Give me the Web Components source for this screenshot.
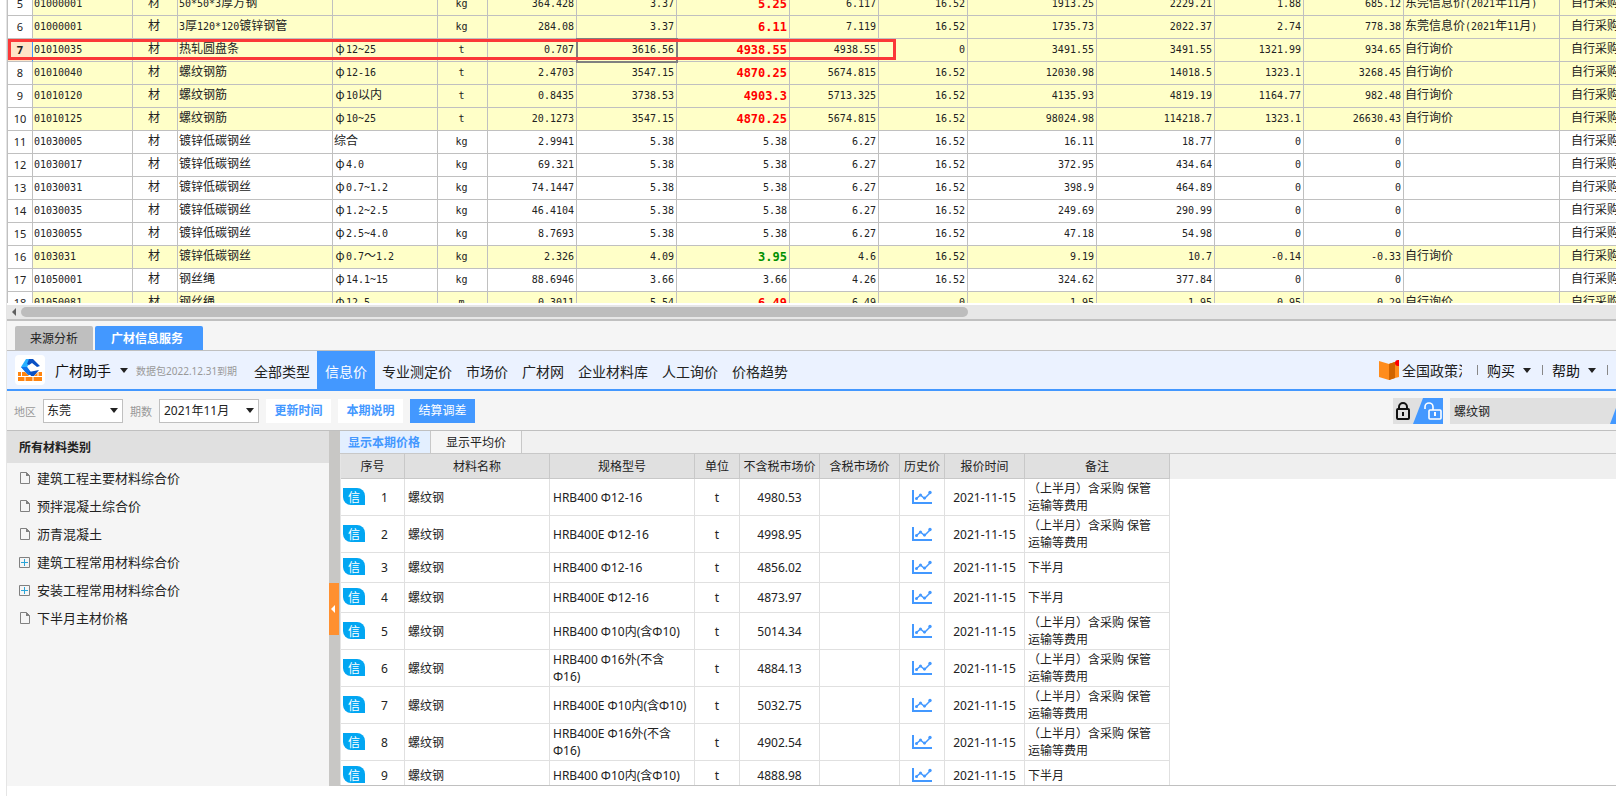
<!DOCTYPE html>
<html lang="zh-CN">
<head>
<meta charset="utf-8">
<title>广材助手</title>
<style>
html,body{margin:0;height:100%;background:#fff}
body{font-family:"Noto Sans","Noto Sans CJK SC",sans-serif;font-size:12px;color:#222;
  --blue:#4398ff;--line:#c0c0c0;--pane:#f5f5f5;overflow:hidden}
</style>
</head>
<body>
<app-shell>
  <price-grid slot="grid"></price-grid>
  <dock-tabs slot="dock"></dock-tabs>
  <helper-bar slot="dock"></helper-bar>
  <filter-bar slot="dock"></filter-bar>
  <split-view slot="work">
    <category-tree slot="side"></category-tree>
    <quote-panel slot="main"></quote-panel>
  </split-view>
</app-shell>
<script>
const define = (name, render) => customElements.define(name, class extends HTMLElement {
  connectedCallback() {
    if (this.shadowRoot) return;
    this.attachShadow({mode: 'open'}).innerHTML = render(this);
  }
});

define('app-shell', () => `
<style>
:host{display:flex;flex-direction:column;height:100vh;box-sizing:border-box;margin-left:6px;border-left:1px solid #e5e5e5;padding-bottom:10px}
.grid{flex:319 1 0;min-height:0;display:flex;flex-direction:column}
.dock{flex:none;border-top:2px solid var(--line)}
.work{flex:355 1 0;min-height:0;display:flex}
::slotted([slot=grid]),::slotted([slot=work]){flex:1;min-height:0;min-width:0}
</style>
<div class="grid"><slot name="grid"></slot></div>
<div class="dock"><slot name="dock"></slot></div>
<div class="work"><slot name="work"></slot></div>`);

/* ---------- material price grid ---------- */
const ROWS = [
 [5,'01000001','50*50*3厚方钢','','kg','364.428','3.37','5.25','6.117','16.52','1913.25','2229.21','1.88','685.12','东莞信息价(2021年11月)','y r'],
 [6,'01000001','3厚120*120镀锌钢管','','kg','284.08','3.37','6.11','7.119','16.52','1735.73','2022.37','2.74','778.38','东莞信息价(2021年11月)','y r'],
 [7,'01010035','热轧圆盘条','φ12~25','t','0.707','3616.56','4938.55','4938.55','0','3491.55','3491.55','1321.99','934.65','自行询价','y r cur'],
 [8,'01010040','螺纹钢筋','φ12-16','t','2.4703','3547.15','4870.25','5674.815','16.52','12030.98','14018.5','1323.1','3268.45','自行询价','y r'],
 [9,'01010120','螺纹钢筋','φ10以内','t','0.8435','3738.53','4903.3','5713.325','16.52','4135.93','4819.19','1164.77','982.48','自行询价','y r'],
 [10,'01010125','螺纹钢筋','φ10~25','t','20.1273','3547.15','4870.25','5674.815','16.52','98024.98','114218.7','1323.1','26630.43','自行询价','y r'],
 [11,'01030005','镀锌低碳钢丝','综合','kg','2.9941','5.38','5.38','6.27','16.52','16.11','18.77','0','0','',''],
 [12,'01030017','镀锌低碳钢丝','φ4.0','kg','69.321','5.38','5.38','6.27','16.52','372.95','434.64','0','0','',''],
 [13,'01030031','镀锌低碳钢丝','φ0.7~1.2','kg','74.1447','5.38','5.38','6.27','16.52','398.9','464.89','0','0','',''],
 [14,'01030035','镀锌低碳钢丝','φ1.2~2.5','kg','46.4104','5.38','5.38','6.27','16.52','249.69','290.99','0','0','',''],
 [15,'01030055','镀锌低碳钢丝','φ2.5~4.0','kg','8.7693','5.38','5.38','6.27','16.52','47.18','54.98','0','0','',''],
 [16,'0103031','镀锌低碳钢丝','φ0.7～1.2','kg','2.326','4.09','3.95','4.6','16.52','9.19','10.7','-0.14','-0.33','自行询价','y g'],
 [17,'01050001','钢丝绳','φ14.1~15','kg','88.6946','3.66','3.66','4.26','16.52','324.62','377.84','0','0','',''],
 [18,'01050081','钢丝绳','φ12.5','m','0.3011','5.54','6.49','6.49','0','1.95','1.95','0.95','0.29','自行询价','y r']
];
const COLS = [25,100,45,155,105,50,89,100,113,89,89,129,118,89,100,156,120];
/* ideographs are set one size larger than the fixed-width figures beside them */
const mix = s => s.replace(/φ/g,'\u0001').replace(/[\u4e00-\u9fff～]+/g, m => `<b class="c">${m}</b>`).replace(/\u0001/g,'<b class="c phi">φ</b>');

define('price-grid', () => `
<style>
:host{display:flex;flex-direction:column;background:#fff}
.view{flex:1;min-height:0;overflow:hidden;position:relative;border-left:1px solid var(--line)}
table{border-spacing:0;table-layout:fixed;width:${COLS.reduce((a,b)=>a+b)}px;margin-top:-7px;font-family:"DejaVu Sans Mono","Noto Sans CJK SC",monospace;font-size:10px}
td,th{height:22px;line-height:18px;padding:0 2px;border:solid var(--line);border-width:0 1px 1px 0;white-space:nowrap;overflow:hidden;text-align:right;font-weight:400}
th{font-family:"Noto Sans",sans-serif;font-size:11px;text-align:center;background:#fff;padding:0}
.c{font:12px/14px "Noto Sans CJK SC",sans-serif}
.phi{display:inline-block;width:12px;text-align:center}
.l{text-align:left}.m{text-align:center}.l,.m{padding:0 3px 0 1px}
.last{text-align:left;padding-left:11px}
.y td{background:#ffffc8}
.r .price{color:red;font-weight:700;font-size:12px}
.g .price{color:#009000;font-weight:700;font-size:12px}
.cur th{background:#ffe4c8;font-weight:700;border-right:1px solid var(--blue)}
.cur .focus{outline:2px solid #808080;outline-offset:-1px}
.mark{position:absolute;left:0;top:39px;width:882px;height:15px;border:3px solid #fb3838}
.bar{flex:none;height:14px;margin-top:2px;background:#e7e7e7;display:flex;align-items:center;padding-left:5px;gap:5px}
.bar i{border:solid transparent;border-width:4px 4px 4px 0;border-right-color:#606060}
.bar div{height:10px;flex:190 1 0;background:#bdbdbd;border-radius:5px}
.bar span{flex:129 1 0}
</style>
<div class="view">
<table><colgroup>${COLS.map(w=>`<col style="width:${w}px">`).join('')}</colgroup><tbody>
${ROWS.map(r=>`<tr class="${r[15]}"><th scope="row">${r[0]}</th><td class="l">${r[1]}</td><td class="m">${mix('材')}</td><td class="l">${mix(r[2])}</td><td class="l">${mix(r[3])}</td><td class="m">${r[4]}</td><td>${r[5]}</td><td class="focus">${r[6]}</td><td class="price">${r[7]}</td>${r.slice(8,14).map(v=>`<td>${v}</td>`).join('')}<td class="l">${mix(r[14])}</td><td class="last">${mix('自行采购')}</td></tr>`).join('')}
</tbody></table>
<div class="mark"></div>
</div>
<div class="bar"><i></i><div></div><span></span></div>`);

/* ---------- dock tabs ---------- */
define('dock-tabs', () => `
<style>
:host{display:flex;align-items:flex-end;gap:2px;height:29px;padding-left:8px;background:var(--pane);border-bottom:1px solid var(--line)}
button{font:12px/24px "Noto Sans","Noto Sans CJK SC",sans-serif;height:24px;border:0;border-radius:2px 2px 0 0;padding:1px 15px 0;background:#bfbfbf;color:#222}
button.on{background:var(--blue);color:#fff;font-weight:700;padding:1px 20px 0 16px}
</style><button>来源分析</button><button class="on">广材信息服务</button>`);

define('drop-caret', () => `<style>:host{display:inline-block;width:0;height:0;border:solid transparent;border-width:5px 4px 0;border-top-color:#222}</style>`);

/* ---------- helper header ---------- */
define('helper-bar', () => `
<style>
:host{display:flex;align-items:center;height:38px;background:#ebf2ff;border-bottom:2px solid var(--blue);font-size:14px;white-space:nowrap;overflow:hidden}
.logo{flex:none;width:30px;height:30px;margin-left:8px;background:#fff;border-radius:4px}
button{font:inherit;color:inherit;background:none;border:0;padding:0;display:flex;align-items:center;gap:9px}
.name{margin-left:10px;color:#111}
small{font-size:10px;color:#999;margin:0 9px 0 8px;width:102px}
nav{display:flex;align-self:stretch}
a{color:#222;text-decoration:none;padding:0 7px;line-height:42px}
a.on{background:var(--blue);color:#fff;padding:0 8px}
.right{margin-left:auto;display:flex;align-items:center;gap:9px;flex:none;padding-right:8px}
.policy{display:flex;align-items:center;gap:3px;padding:0;line-height:38px;margin-right:6px}
.policy span{width:60px;overflow:hidden;padding-top:2px}
hr{width:1px;height:10px;border:0;margin:0;background:#888}
.right button{gap:8px;color:#111;padding-right:2px}
</style>
<svg class="logo" viewBox="0 0 30 30"><path d="M11 4h7l-6 8 6 8h-5l-7-8z" fill="#28b0ff"/><path d="M6 12h6l6 8h-5z" fill="#1272ea"/><path d="M14 4h4l7 7-3 1-5-4-3 2-2-1z" fill="#0a50c4"/><path d="m14 17 10-2-5 6h-3z" fill="#0a50c4"/><path d="M3 17h7l4 4h5l4-4h4v9H3z" fill="#ff8410"/><path d="M3 21.500h24M10 21v5M6.500 17v4M18 21v5M23 17v4" stroke="#fff"/></svg>
<button class="name">广材助手 <drop-caret></drop-caret></button>
<small>数据包2022.12.31到期</small>
<nav>${['全部类型','信息价','专业测定价','市场价','广材网','企业材料库','人工询价','价格趋势'].map((t,i)=>`<a href="#"${i==1?' class="on"':''}>${t}</a>`).join('')}</nav>
<div class="right">
<a class="policy" href="#"><svg width="20" height="20" viewBox="0 0 20 20"><path d="M0 1l10 3v16L0 17z" fill="#ff8c1c"/><path d="M10 4l6-2v16l-6 2z" fill="#d96a00"/><path d="M10 4l10-3v16l-4 1V4z" fill="#ff8c1c"/><path d="M10 4l6-2v16l-6 2z" fill="#d06400"/><circle cx="19" cy="3" r="3" fill="red"/></svg><span>全国政策法规</span></a>
<hr><button>购买 <drop-caret></drop-caret></button><hr><button>帮助 <drop-caret></drop-caret></button><hr>
</div>`);

/* ---------- filters ---------- */
define('filter-bar', () => `
<style>
:host{display:flex;align-items:center;height:39px;background:var(--pane);border-bottom:1px solid var(--line);padding-left:7px;white-space:nowrap}
label{font-size:11px;color:#999;margin-right:7px}
.pick{position:relative;margin-right:7px;display:flex}
.pick drop-caret{position:absolute;right:5px;top:9px}
select{appearance:none;box-sizing:border-box;width:80px;height:24px;border:1px solid var(--line);border-radius:0;background:#fff;font:12px "Noto Sans","Noto Sans CJK SC",sans-serif;color:#222;padding:0 3px}
select.wide{width:100px;padding-left:4px}
button{font:12px/24px "Noto Sans","Noto Sans CJK SC",sans-serif;height:24px;width:65px;border:0;padding:0;margin-right:7px;background:#fff;color:var(--blue);font-weight:700}
button.on{background:var(--blue);color:#fff;font-weight:400}
.lock{display:block;flex:none;margin:0 7px 0 auto}
.find{display:flex;width:166px;height:26px;background:#e0e0e0}
input{flex:1;min-width:0;border:0;background:none;padding:0 4px;font:12px "Noto Sans","Noto Sans CJK SC",sans-serif;color:#222}
</style>
<label for="area">地区</label><span class="pick"><select id="area"><option>东莞</option></select><drop-caret></drop-caret></span>
<label for="term">期数</label><span class="pick"><select id="term" class="wide"><option>2021年11月</option></select><drop-caret></drop-caret></span>
<button>更新时间</button><button>本期说明</button><button class="on">结算调差</button>
<svg class="lock" width="50" height="26" viewBox="0 0 50 26"><path d="M0 0h50v26H0z" fill="#e0e0e0"/><path d="M30 0h20v26H20z" fill="var(--blue)"/>
<g fill="none" stroke="#111" stroke-width="2"><rect x="4" y="11" width="12" height="10" rx="1"/><path d="M6 11V9a4 4 0 0 1 8 0v2"/></g><path d="M9 14h2v4H9z" fill="#111"/>
<g fill="none" stroke="#fff" stroke-width="1.600"><rect x="36" y="12" width="12" height="9" rx="1"/><path d="M32 11V9a4 4 0 0 1 8 0v3"/></g><path d="M41 14h2v4h-2z" fill="#fff"/></svg>
<div class="find"><input aria-label="搜索材料" value="螺纹钢"><svg width="6" height="26" viewBox="0 0 6 26"><path d="M6 10v16H0z" fill="var(--blue)"/></svg></div>`);

/* ---------- split work area ---------- */
define('split-view', () => `
<style>
:host{display:flex}
.side{flex:none;width:322px;background:var(--pane);overflow:hidden}
.grip{flex:none;width:11px;background:#c8c7c5;display:flex;align-items:center}
.grip button{width:10px;height:52px;padding:0 2px 0 0;border:0;background:#ff9030;display:flex;align-items:center;justify-content:center}
.main{flex:1;min-width:0;display:flex}
::slotted([slot=main]){flex:1;min-width:0}
</style>
<div class="side"><slot name="side"></slot></div>
<div class="grip"><button aria-label="收起"><svg width="4" height="8" viewBox="0 0 4 8"><path d="M4 0v8L0 4z" fill="#fff"/></svg></button></div>
<div class="main"><slot name="main"></slot></div>`);

const LEAF='<svg width="12" height="13" viewBox="0 0 12 13"><path d="M1.500.5h6l3 3v8h-9z" fill="none" stroke="#808080"/><path d="M7 0v4h4z" fill="#808080"/></svg>';
const PLUS='<svg width="12" height="12" viewBox="0 0 12 12"><path d="M.5.5h10v10H.5z" fill="none" stroke="#808080"/><path d="M5.500 2v7M2 5.500h7" stroke="#2ba5d8"/></svg>';
define('category-tree', () => `
<style>
:host{display:block}
h2{margin:0;height:32px;line-height:34px;padding-left:12px;font-size:12px;background:#e0e0e0}
ul{list-style:none;margin:0;padding:0 0 0 12px}
li{height:28px;display:flex;align-items:center;gap:6px;font-size:13px}
svg{margin-top:3px}
</style>
<h2>所有材料类别</h2>
<ul>${[['建筑工程主要材料综合价'],['预拌混凝土综合价'],['沥青混凝土'],['建筑工程常用材料综合价',1],['安装工程常用材料综合价',1],['下半月主材价格']].map(([t,p])=>`<li>${p?PLUS:LEAF}<span>${t}</span></li>`).join('')}</ul>`);

/* ---------- quotes ---------- */
const UP='（上半月）含采购 保管<br>运输等费用', DOWN='下半月';
const QUOTES=[['HRB400 Φ12-16','4980.53',UP],['HRB400E Φ12-16','4998.95',UP],['HRB400 Φ12-16','4856.02',DOWN],['HRB400E Φ12-16','4873.97',DOWN],
['HRB400 Φ10内(含Φ10)','5014.34',UP],['HRB400 Φ16外(不含<br>Φ16)','4884.13',UP],['HRB400E Φ10内(含Φ10)','5032.75',UP],['HRB400E Φ16外(不含<br>Φ16)','4902.54',UP],['HRB400 Φ10内(含Φ10)','4888.98',DOWN]];
const CHART='<svg width="20" height="15" viewBox="0 0 20 15"><path d="M1 0v13h19" fill="none" stroke="#4398ff" stroke-width="2"/><path d="M4 9l4.500-4 4 3.500L18 3" fill="none" stroke="#4398ff" stroke-width="1.500"/><g fill="#4398ff"><circle cx="4.500" cy="8.500" r="1.500"/><circle cx="8.500" cy="5" r="1.500"/><circle cx="12.500" cy="8" r="1.500"/><circle cx="18" cy="2.500" r="1.700"/></g></svg>';
const QC=[64,145,145,45,80,80,45,80,145];
define('quote-panel', () => `
<style>
:host{display:flex;flex-direction:column;background:#fff;overflow:hidden;border-bottom:1px solid var(--line);box-sizing:border-box}
.tabs{flex:none;display:flex;height:22px;background:#f1f1f1;border-bottom:1px solid #c8c8c8}
.tabs button{font:12px/20px "Noto Sans","Noto Sans CJK SC",sans-serif;color:#222;border:0;border-right:1px solid #c8c8c8;padding:2px 0 0;width:91px;background:#f5f5f5}
.tabs .on{background:#e3efff;color:var(--blue);font-weight:700;padding-right:2px}
.rows{flex:1;min-height:0;overflow:hidden;background:linear-gradient(#efefef 0 25px,#fff 25px)}
table{border-spacing:0;table-layout:fixed;width:830px;background:#fff;border-left:1px solid #e5e5e5}
th{height:22px;padding:2px 0 0;background:#e0e0e0;border:solid #c8c8c8;border-width:0 1px 1px 0;font-weight:400;white-space:nowrap;line-height:22px}
td{padding:1px 4px;height:27px;line-height:17px;border:solid #e0e0e0;border-width:0 1px 1px 0;text-align:center;white-space:nowrap}
td.l{text-align:left;padding-left:3px}
td.i{padding:0 0 0 2px}
.n{display:flex;align-items:center}
.n i{font:normal 12px/17px "Noto Sans CJK SC",sans-serif;width:22px;margin-bottom:2px;background:#02a6f2;color:#fff;border-radius:0 8px 0 8px}
.n span{flex:1}
svg{display:block;margin:auto}
</style>
<div class="tabs"><button class="on">显示本期价格</button><button>显示平均价</button></div>
<div class="rows"><table><colgroup>${QC.map(w=>`<col style="width:${w}px">`).join('')}</colgroup>
<thead><tr>${['序号','材料名称','规格型号','单位','不含税市场价','含税市场价','历史价','报价时间','备注'].map(t=>`<th scope="col">${t}</th>`).join('')}</tr></thead>
<tbody>${QUOTES.map((q,i)=>`<tr><td class="i"><div class="n"><i>信</i><span>${i+1}</span></div></td><td class="l">螺纹钢</td><td class="l">${q[0]}</td><td>t</td><td>${q[1]}</td><td></td><td>${CHART}</td><td>2021-11-15</td><td class="l">${q[2]}</td></tr>`).join('')}</tbody></table></div>`);
</script>
</body>
</html>
